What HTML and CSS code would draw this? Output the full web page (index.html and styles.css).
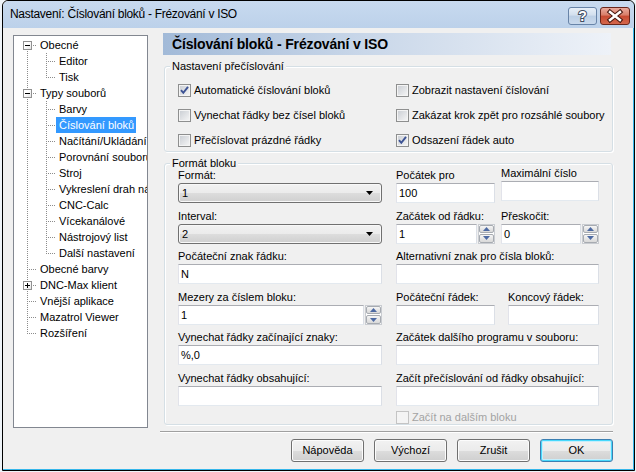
FILE: index.html
```html
<!DOCTYPE html>
<html lang="cs">
<head>
<meta charset="utf-8">
<title>Nastavení</title>
<link rel="stylesheet" href="styles.css">
</head>
<body>
<div class="window">
  <div class="titlebar">
    <span class="title">Nastavení: Číslování bloků - Frézování v ISO</span>
    <div class="tbtns">
      <span class="tb help"><svg width="27" height="16" viewBox="0 0 27 16"><text x="13.5" y="13" text-anchor="middle" class="qm">?</text></svg></span>
      <span class="tb close"><svg width="28" height="16" viewBox="0 0 28 16"><path d="M9 4 L19 12 M19 4 L9 12" stroke="#4a1a12" stroke-width="4.6" stroke-linecap="square" fill="none"/><path d="M9 4 L19 12 M19 4 L9 12" stroke="#fff" stroke-width="2.4" stroke-linecap="square" fill="none"/></svg></span>
    </div>
  </div>
  <div class="client">
    <div class="tree">
      <div class="row"><span class="g f"><span class="bx"><svg width="7" height="7" viewBox="0 0 7 7"><path d="M1 3.5 H6" stroke="#000" stroke-width="1"/></svg></span></span><span class="lbl">Obecné</span></div>
      <div class="row"><span class="g v"></span><span class="g t"></span><span class="lbl">Editor</span></div>
      <div class="row"><span class="g v"></span><span class="g l"></span><span class="lbl">Tisk</span></div>
      <div class="row"><span class="g t"><span class="bx"><svg width="7" height="7" viewBox="0 0 7 7"><path d="M1 3.5 H6" stroke="#000" stroke-width="1"/></svg></span></span><span class="lbl">Typy souborů</span></div>
      <div class="row"><span class="g v"></span><span class="g t"></span><span class="lbl">Barvy</span></div>
      <div class="row"><span class="g v"></span><span class="g t"></span><span class="lbl sel">Číslování bloků</span></div>
      <div class="row"><span class="g v"></span><span class="g t"></span><span class="lbl">Načítání/Ukládání</span></div>
      <div class="row"><span class="g v"></span><span class="g t"></span><span class="lbl">Porovnání souborů</span></div>
      <div class="row"><span class="g v"></span><span class="g t"></span><span class="lbl">Stroj</span></div>
      <div class="row"><span class="g v"></span><span class="g t"></span><span class="lbl">Vykreslení drah nástroje</span></div>
      <div class="row"><span class="g v"></span><span class="g t"></span><span class="lbl">CNC-Calc</span></div>
      <div class="row"><span class="g v"></span><span class="g t"></span><span class="lbl">Vícekanálové</span></div>
      <div class="row"><span class="g v"></span><span class="g t"></span><span class="lbl">Nástrojový list</span></div>
      <div class="row"><span class="g v"></span><span class="g l"></span><span class="lbl">Další nastavení</span></div>
      <div class="row"><span class="g t"></span><span class="lbl">Obecné barvy</span></div>
      <div class="row"><span class="g t"><span class="bx"><svg width="7" height="7" viewBox="0 0 7 7"><path d="M1 3.5 H6 M3.5 1 V6" stroke="#000" stroke-width="1"/></svg></span></span><span class="lbl">DNC-Max klient</span></div>
      <div class="row"><span class="g t"></span><span class="lbl">Vnější aplikace</span></div>
      <div class="row"><span class="g t"></span><span class="lbl">Mazatrol Viewer</span></div>
      <div class="row"><span class="g l"></span><span class="lbl">Rozšíření</span></div>
    </div>

    <div class="panel">
      <div class="header">Číslování bloků - Frézování v ISO</div>

      <div class="group g1">
        <div class="legend">Nastavení přečíslování</div>
        <div class="cbgrid">
          <div class="cb"><span class="box"><svg width="11" height="11" viewBox="0 0 11 11"><path d="M2 5.2 L4.3 7.8 L9 1.8" stroke="#3d5394" stroke-width="1.9" fill="none"/></svg></span><span>Automatické číslování bloků</span></div>
          <div class="cb"><span class="box"></span><span>Zobrazit nastavení číslování</span></div>
          <div class="cb"><span class="box"></span><span>Vynechat řádky bez čísel bloků</span></div>
          <div class="cb"><span class="box"></span><span>Zakázat krok zpět pro rozsáhlé soubory</span></div>
          <div class="cb"><span class="box"></span><span>Přečíslovat prázdné řádky</span></div>
          <div class="cb"><span class="box"><svg width="11" height="11" viewBox="0 0 11 11"><path d="M2 5.2 L4.3 7.8 L9 1.8" stroke="#3d5394" stroke-width="1.9" fill="none"/></svg></span><span>Odsazení řádek auto</span></div>
        </div>
      </div>

      <div class="group g2">
        <div class="legend">Formát bloku</div>
        <div class="cols">
          <div class="col lc">
            <div class="fld"><div class="lab">Formát:</div><div class="combo"><span>1</span><svg width="7" height="4" viewBox="0 0 7 4"><path d="M0 0 H7 L3.5 4 Z" fill="#000"/></svg></div></div>
            <div class="fld"><div class="lab">Interval:</div><div class="combo"><span>2</span><svg width="7" height="4" viewBox="0 0 7 4"><path d="M0 0 H7 L3.5 4 Z" fill="#000"/></svg></div></div>
            <div class="fld"><div class="lab">Počáteční znak řádku:</div><div class="tx">N</div></div>
            <div class="fld"><div class="lab">Mezery za číslem bloku:</div>
              <div class="spinwrap"><div class="tx">1</div><div class="spin"><span class="sb"><svg width="7" height="4" viewBox="0 0 7 4"><path d="M0 4 H7 L3.5 0 Z" fill="#4d6aa3"/></svg></span><span class="sb"><svg width="7" height="4" viewBox="0 0 7 4"><path d="M0 0 H7 L3.5 4 Z" fill="#4d6aa3"/></svg></span></div></div>
            </div>
            <div class="fld"><div class="lab">Vynechat řádky začínající znaky:</div><div class="tx">%,0</div></div>
            <div class="fld"><div class="lab">Vynechat řádky obsahující:</div><div class="tx"></div></div>
          </div>

          <div class="col rc">
            <div class="pair">
              <div class="fld w99"><div class="lab">Počátek pro</div><div class="tx">100</div></div>
              <div class="fld w98 up"><div class="lab">Maximální číslo</div><div class="tx"></div></div>
            </div>
            <div class="pair">
              <div class="fld w99"><div class="lab">Začátek od řádku:</div>
                <div class="spinwrap"><div class="tx">1</div><div class="spin"><span class="sb"><svg width="7" height="4" viewBox="0 0 7 4"><path d="M0 4 H7 L3.5 0 Z" fill="#4d6aa3"/></svg></span><span class="sb"><svg width="7" height="4" viewBox="0 0 7 4"><path d="M0 0 H7 L3.5 4 Z" fill="#4d6aa3"/></svg></span></div></div>
              </div>
              <div class="fld w98"><div class="lab">Přeskočit:</div>
                <div class="spinwrap"><div class="tx">0</div><div class="spin"><span class="sb"><svg width="7" height="4" viewBox="0 0 7 4"><path d="M0 4 H7 L3.5 0 Z" fill="#4d6aa3"/></svg></span><span class="sb"><svg width="7" height="4" viewBox="0 0 7 4"><path d="M0 0 H7 L3.5 4 Z" fill="#4d6aa3"/></svg></span></div></div>
              </div>
            </div>
            <div class="fld"><div class="lab">Alternativní znak pro čísla bloků:</div><div class="tx"></div></div>
            <div class="pair gap13">
              <div class="fld w99"><div class="lab">Počáteční řádek:</div><div class="tx"></div></div>
              <div class="fld w91"><div class="lab">Koncový řádek:</div><div class="tx"></div></div>
            </div>
            <div class="fld"><div class="lab">Začátek dalšího programu v souboru:</div><div class="tx"></div></div>
            <div class="fld"><div class="lab">Začít přečíslování od řádky obsahující:</div><div class="tx"></div></div>
            <div class="cb dis"><span class="box"></span><span>Začít na dalším bloku</span></div>
          </div>
        </div>
      </div>

      <div class="sep"></div>
      <div class="buttons">
        <span class="btn">Nápověda</span>
        <span class="btn">Výchozí</span>
        <span class="btn">Zrušit</span>
        <span class="btn def">OK</span>
      </div>
    </div>
  </div>
</div>
</body>
</html>
```

FILE: styles.css
```css
* { box-sizing: border-box; }
html, body { margin: 0; padding: 0; }
body {
  width: 636px;
  height: 472px;
  overflow: hidden;
  background: #eef3f8;
  font-family: "Liberation Sans", Arial, sans-serif;
  font-size: 11px;
  color: #000;
}

.window {
  margin-left: 2px;
  width: 633px;
  height: 471px;
  border: 1px solid #000;
  border-radius: 6px 6px 0 0;
  background: #f0f0f0;
  display: flex;
  flex-direction: column;
  overflow: hidden;
  box-shadow: inset -1px -1px 0 #35b6ea;
}

/* title bar */
.titlebar {
  height: 27px;
  flex: none;
  display: flex;
  align-items: flex-start;
  padding-left: 7px;
  background: linear-gradient(to bottom, #c8daef 0%, #bcd1ea 100%);
  border-radius: 5px 5px 0 0;
}
.title {
  font-size: 12px;
  letter-spacing: -0.3px;
  line-height: 27px;
  white-space: nowrap;
}
.tbtns {
  margin-left: auto;
  margin-top: 6px;
  margin-right: 4px;
  display: flex;
  gap: 3px;
}
.tb {
  height: 18px;
  border-radius: 3px;
  display: flex;
  align-items: center;
  justify-content: center;
}
.help {
  width: 29px;
  border: 1px solid #6884a8;
  background: linear-gradient(to bottom, #e7eff8 0%, #d2dfee 45%, #bccfe5 50%, #c9d9ec 100%);
}
.close {
  width: 30px;
  border: 1px solid #6a261b;
  background: linear-gradient(to bottom, #e9aa9c 0%, #d97d68 45%, #c84a31 50%, #d4674c 100%);
}
.qm {
  font-family: "Liberation Sans", Arial, sans-serif;
  font-weight: bold;
  font-size: 14px;
  fill: #fff;
  stroke: #3f4d63;
  stroke-width: 2px;
  paint-order: stroke;
}

/* client area */
.client {
  flex: 1;
  display: flex;
  align-items: flex-start;
}

/* tree */
.tree {
  margin: 7px 0 0 10px;
  width: 135px;
  height: 393px;
  flex: none;
  border: 1px solid #828790;
  background: #fff;
  overflow: hidden;
  padding-top: 1px;
}
.row {
  display: flex;
  height: 16px;
  padding-left: 4px;
  white-space: nowrap;
}
.g {
  width: 19px;
  height: 16px;
  flex: none;
  background-repeat: no-repeat;
}
.g.v {
  background-image: repeating-linear-gradient(to bottom, #8c8c8c 0 1px, transparent 1px 2px);
  background-size: 1px 16px;
  background-position: 9px 0;
}
.g.t {
  background-image:
    repeating-linear-gradient(to right, #8c8c8c 0 1px, transparent 1px 2px),
    repeating-linear-gradient(to bottom, #8c8c8c 0 1px, transparent 1px 2px);
  background-size: 10px 1px, 1px 16px;
  background-position: 9px 8px, 9px 0;
}
.g.l {
  background-image:
    repeating-linear-gradient(to right, #8c8c8c 0 1px, transparent 1px 2px),
    repeating-linear-gradient(to bottom, #8c8c8c 0 1px, transparent 1px 2px);
  background-size: 10px 1px, 1px 9px;
  background-position: 9px 8px, 9px 0;
}
.g.f {
  background-image:
    repeating-linear-gradient(to right, #8c8c8c 0 1px, transparent 1px 2px),
    repeating-linear-gradient(to bottom, #8c8c8c 0 1px, transparent 1px 2px);
  background-size: 10px 1px, 1px 8px;
  background-position: 9px 8px, 9px 8px;
}
.bx {
  display: flex;
  width: 9px;
  height: 9px;
  margin: 4px 0 0 5px;
  border: 1px solid #919191;
  background: linear-gradient(135deg, #ffffff 40%, #e4e4e4 100%);
}
.lbl {
  padding: 0 2px 0 3px;
  line-height: 16px;
  height: 16px;
}
.lbl.sel {
  background: #3399ff;
  color: #fff;
}

/* right panel */
.panel {
  margin-left: 12px;
  width: 453px;
  flex: none;
  display: flex;
  flex-direction: column;
}
.header {
  margin: 5px 0 0 3px;
  width: 448px;
  height: 22px;
  padding-left: 9px;
  background: linear-gradient(to right, #a2bad8 0%, #c9d7e9 45%, #eef2f8 100%);
  font-weight: bold;
  font-size: 14px;
  letter-spacing: -0.15px;
  line-height: 23px;
  white-space: nowrap;
}

.group {
  margin-left: 4px;
  width: 449px;
  border: 1px solid #d5dfe5;
  border-radius: 3px;
  box-shadow: inset 1px 1px 0 #fff, 1px 1px 0 #fff;
}
.legend {
  width: max-content;
  margin: -7px 0 0 5px;
  padding: 0 2px;
  line-height: 13px;
  height: 13px;
  background: #f0f0f0;
  white-space: nowrap;
}
.g1 {
  margin-top: 11px;
  padding-bottom: 4px;
}
.cbgrid {
  margin-top: 11px;
  padding-left: 13px;
  display: grid;
  grid-template-columns: 218px 1fr;
  row-gap: 12px;
}
.cb {
  display: flex;
  align-items: center;
  gap: 3px;
  height: 13px;
  line-height: 13px;
  white-space: nowrap;
}
.box {
  width: 13px;
  height: 13px;
  flex: none;
  border: 1px solid #8e8f8f;
  background: linear-gradient(135deg, #c8ccd2 0%, #f7f7f7 100%);
  box-shadow: inset 0 0 0 1px #f4f4f4;
  display: flex;
}
.cb.dis { color: #a3a3a3; margin-top: -1px; }
.cb.dis .box {
  border-color: #c4c4c4;
  background: #f4f4f4;
  box-shadow: none;
}

.g2 {
  margin-top: 11px;
}
.cols {
  margin-top: -2px;
  padding-left: 13px;
  display: flex;
  gap: 14px;
}
.col {
  display: flex;
  flex-direction: column;
  gap: 5.6px;
}
.lc { width: 204px; }
.rc { width: 203px; }
.fld {
  display: flex;
  flex-direction: column;
}
.lab {
  height: 15px;
  line-height: 15px;
  white-space: nowrap;
}
.tx {
  height: 20px;
  border: 1px solid;
  border-color: #abadb3 #dbdfe6 #e3e9ef #e2e3ea;
  background: #fff;
  padding-left: 2px;
  line-height: 18px;
  white-space: nowrap;
}
.combo {
  height: 20px;
  border: 1px solid #707070;
  border-radius: 3px;
  background: linear-gradient(to bottom, #f2f2f2 0%, #ebebeb 50%, #dddddd 50%, #cfcfcf 100%);
  box-shadow: inset 0 0 0 1px #f8f8f8;
  display: flex;
  align-items: center;
  justify-content: space-between;
  padding: 0 8px 0 3px;
  line-height: 18px;
}
.spinwrap {
  height: 20px;
  display: flex;
  gap: 1px;
}
.spinwrap .tx { flex: 1; }
.spin {
  width: 17px;
  flex: none;
  display: flex;
  flex-direction: column;
  gap: 1px;
  border: 1px solid #c9ccd1;
  background: #fff;
}
.sb {
  flex: 1;
  display: flex;
  align-items: center;
  justify-content: center;
  border: 1px solid #a7abb1;
  border-radius: 2px;
  background: linear-gradient(to bottom, #f6f6f6 0%, #e6e6e6 50%, #d9d9d9 100%);
}
.pair {
  display: flex;
  align-items: flex-start;
  gap: 6px;
}
.pair.gap13 { gap: 13px; }
.w99 { width: 99px; }
.w98 { width: 98px; }
.w91 { width: 91px; }
.up { margin-top: -2px; }

.sep {
  margin-top: 6px;
  height: 2px;
  border-top: 1px solid #a0a0a0;
  border-bottom: 1px solid #fff;
}
.buttons {
  margin-top: 6px;
  display: flex;
  justify-content: flex-end;
  gap: 10px;
}
.btn {
  width: 73px;
  height: 23px;
  border: 1px solid #707070;
  border-radius: 3px;
  background: linear-gradient(to bottom, #f2f2f2 0%, #ebebeb 50%, #dddddd 50%, #cfcfcf 100%);
  box-shadow: inset 0 0 0 1px #fcfcfc;
  display: flex;
  align-items: center;
  justify-content: center;
  line-height: 21px;
}
.btn.def {
  border-color: #3c7fb1;
  box-shadow: inset 0 0 0 1px #48d8fb, inset 0 0 0 2px #c6eefc;
}
```
